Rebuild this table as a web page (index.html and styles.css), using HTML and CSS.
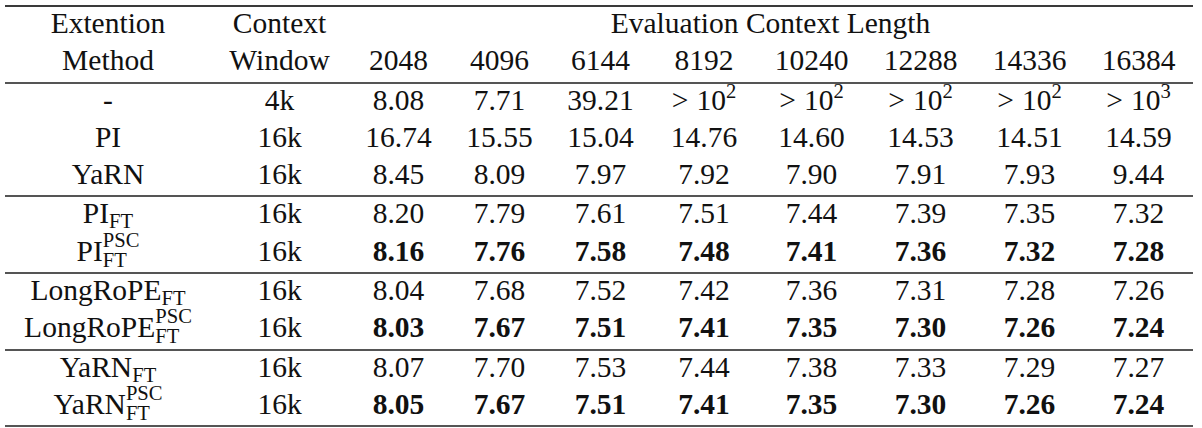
FILE: index.html
```html
<!DOCTYPE html>
<html lang="en">
<head>
<meta charset="utf-8">
<title>Evaluation Context Length</title>
<link rel="stylesheet" href="styles.css">
</head>
<body>
<table class="results">
  <colgroup>
    <col class="c-method">
    <col class="c-window">
    <col class="c-num4"><col class="c-num4"><col class="c-num4">
    <col class="c-num6">
    <col class="c-num5"><col class="c-num5"><col class="c-num5"><col class="c-num5">
  </colgroup>
  <thead>
    <tr>
      <th>Extention</th><th>Context</th><th colspan="8">Evaluation Context Length</th>
    </tr>
    <tr>
      <th>Method</th><th>Window</th>
      <th>2048</th><th>4096</th><th>6144</th><th>8192</th><th>10240</th><th>12288</th><th>14336</th><th>16384</th>
    </tr>
  </thead>
  <tbody>
    <tr>
      <td>-</td><td>4k</td><td>8.08</td><td>7.71</td><td>39.21</td>
      <td><span class="gt">&gt;</span>10<span class="exp">2</span></td>
      <td><span class="gt">&gt;</span>10<span class="exp">2</span></td>
      <td><span class="gt">&gt;</span>10<span class="exp">2</span></td>
      <td><span class="gt">&gt;</span>10<span class="exp">2</span></td>
      <td><span class="gt">&gt;</span>10<span class="exp">3</span></td>
    </tr>
    <tr>
      <td>PI</td><td>16k</td><td>16.74</td><td>15.55</td><td>15.04</td><td>14.76</td><td>14.60</td><td>14.53</td><td>14.51</td><td>14.59</td>
    </tr>
    <tr>
      <td>YaRN</td><td>16k</td><td>8.45</td><td>8.09</td><td>7.97</td><td>7.92</td><td>7.90</td><td>7.91</td><td>7.93</td><td>9.44</td>
    </tr>
  </tbody>
  <tbody>
    <tr>
      <td>PI<span class="sub">FT</span></td><td>16k</td><td>8.20</td><td>7.79</td><td>7.61</td><td>7.51</td><td>7.44</td><td>7.39</td><td>7.35</td><td>7.32</td>
    </tr>
    <tr class="best">
      <td>PI<span class="sub2">FT</span><span class="sup">PSC</span></td><td>16k</td><td>8.16</td><td>7.76</td><td>7.58</td><td>7.48</td><td>7.41</td><td>7.36</td><td>7.32</td><td>7.28</td>
    </tr>
  </tbody>
  <tbody>
    <tr>
      <td>LongRoPE<span class="sub">FT</span></td><td>16k</td><td>8.04</td><td>7.68</td><td>7.52</td><td>7.42</td><td>7.36</td><td>7.31</td><td>7.28</td><td>7.26</td>
    </tr>
    <tr class="best">
      <td>LongRoPE<span class="sub2">FT</span><span class="sup">PSC</span></td><td>16k</td><td>8.03</td><td>7.67</td><td>7.51</td><td>7.41</td><td>7.35</td><td>7.30</td><td>7.26</td><td>7.24</td>
    </tr>
  </tbody>
  <tbody>
    <tr>
      <td>YaRN<span class="sub">FT</span></td><td>16k</td><td>8.07</td><td>7.70</td><td>7.53</td><td>7.44</td><td>7.38</td><td>7.33</td><td>7.29</td><td>7.27</td>
    </tr>
    <tr class="best">
      <td>YaRN<span class="sub2">FT</span><span class="sup">PSC</span></td><td>16k</td><td>8.05</td><td>7.67</td><td>7.51</td><td>7.41</td><td>7.35</td><td>7.30</td><td>7.26</td><td>7.24</td>
    </tr>
  </tbody>
</table>
</body>
</html>
```

FILE: styles.css
```css
* {
  box-sizing: border-box;
}

body {
  margin: 0;
  background: #ffffff;
}

.results {
  margin: 5px 0 0 5px;
  width: 1188px;
  table-layout: fixed;
  border-collapse: separate;
  border-spacing: 0;
  font-family: "Liberation Serif", "Times New Roman", serif;
  font-size: 29.5px;
  color: #111111;
}

.c-method { width: 206px; }
.c-window { width: 137px; }
.c-num4 { width: 101px; }
.c-num6 { width: 106px; }
.c-num5 { width: 109px; }

.results th,
.results td {
  font-weight: normal;
  text-align: center;
  white-space: nowrap;
  line-height: 33px;
  padding: 0 0 4.3px;
}

.results thead tr:first-child th {
  border-top: 2px solid #3a3a3a;
}

.results tbody tr:first-child td {
  border-top: 2px solid #555555;
}

.results tbody:last-child tr:last-child td {
  border-bottom: 2px solid #555555;
}

.best td + td {
  font-weight: bold;
}

.best td:nth-child(2) {
  font-weight: normal;
}

.gt {
  margin-right: 8px;
}

.exp {
  font-size: 20.6px;
  line-height: 0;
  vertical-align: 12px;
}

.sub {
  font-size: 20.6px;
  line-height: 0;
  vertical-align: -5px;
}

.sub2 {
  display: inline-block;
  width: 0;
  font-size: 20.6px;
  line-height: 0;
  vertical-align: -6px;
}

.sup {
  display: inline-block;
  font-size: 20.6px;
  line-height: 0;
  vertical-align: 14px;
}
```
